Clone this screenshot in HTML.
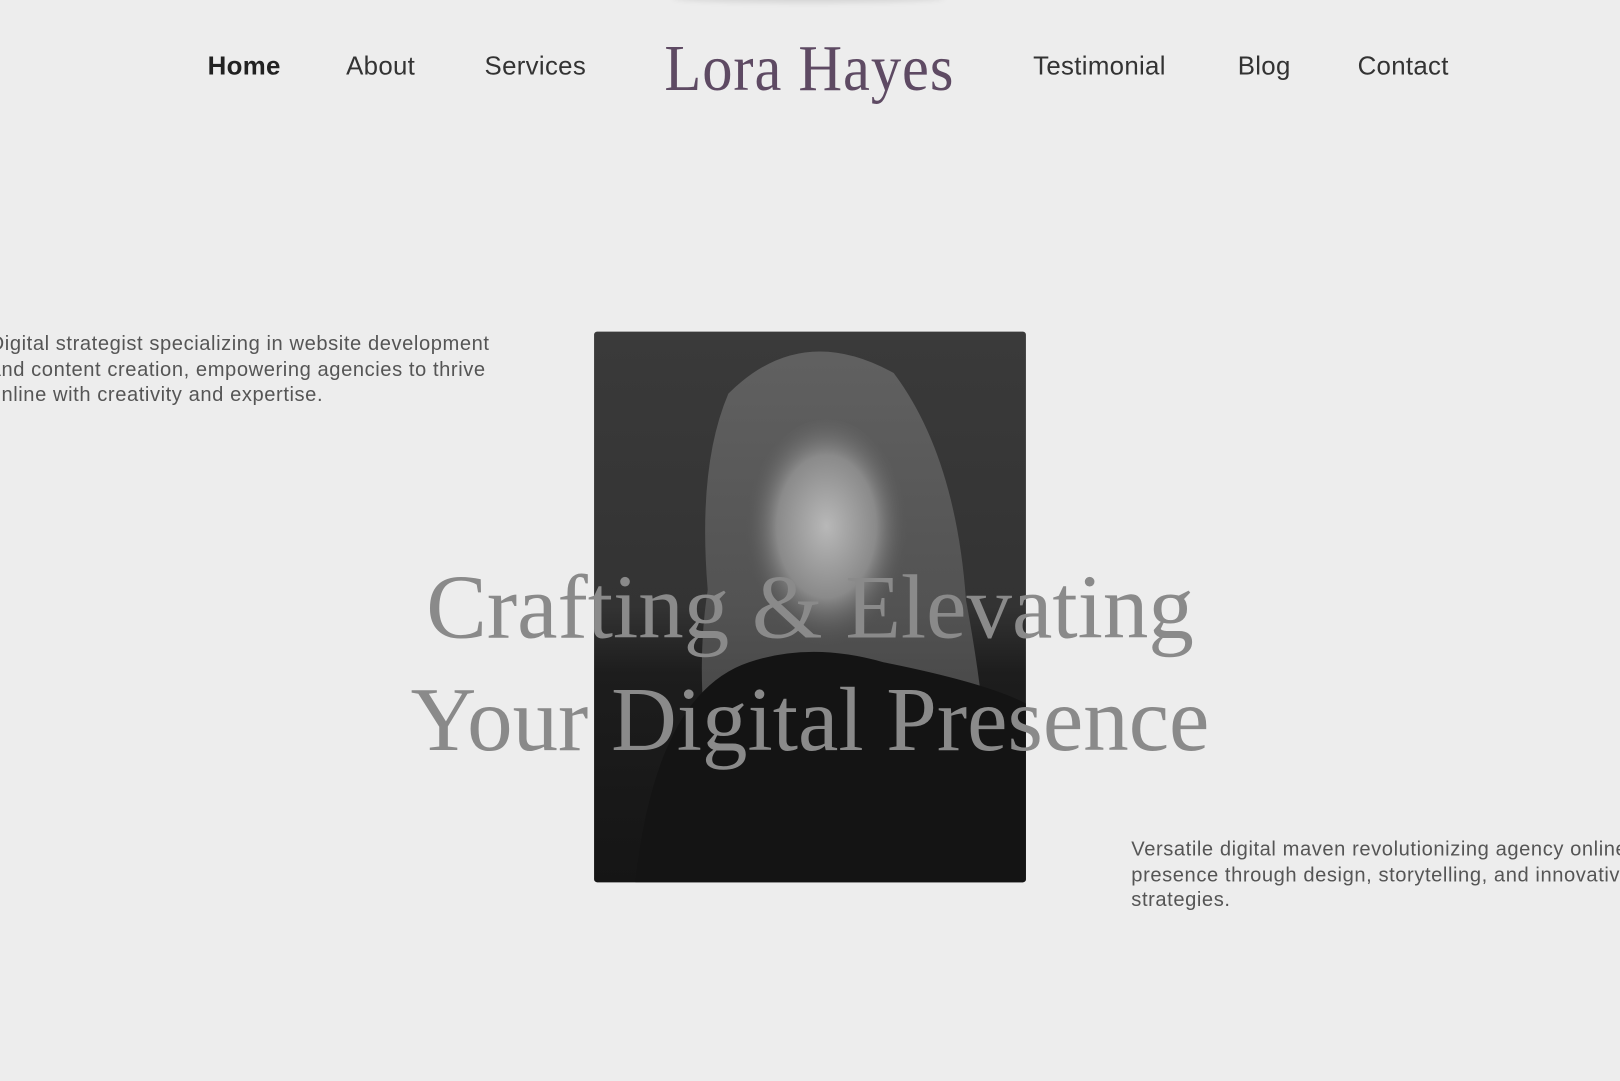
<!DOCTYPE html>
<html><head><meta charset="utf-8"><style>
html,body{margin:0;padding:0;background:#ededed;overflow:hidden;width:1620px;height:1080px}
#w{position:absolute;left:0;top:0;width:1568px;height:1046px;transform:scale(1.03316);transform-origin:0 0;font-family:"Liberation Sans",sans-serif}
.nav{position:absolute;top:48px;font-size:25px;color:#333;line-height:32px;letter-spacing:0.3px}
.logo{position:absolute;left:643px;top:30px;width:280px;font-family:"Liberation Serif",serif;font-size:64px;color:#5e4a63;line-height:72px;white-space:nowrap;transform:scaleX(0.915);transform-origin:0 0;letter-spacing:1px}
.shadow{position:absolute;left:650px;top:-10px;width:265px;height:10px;box-shadow:0 2px 6px rgba(0,0,0,.12);border-radius:50%}
.photo{position:absolute;left:575px;top:321px;width:418px;height:533px;border-radius:3px;overflow:hidden;
background:linear-gradient(180deg,#3a3a3a 0%,#333 50%,#1d1d1d 62%,#151515 100%)}
.p{position:absolute;font-size:19.5px;color:#555;line-height:24.5px;letter-spacing:0.55px}
h1{position:absolute;left:0;width:1568px;top:534px;margin:0;text-align:center;font-family:"Liberation Serif",serif;font-weight:normal;font-size:88px;line-height:109px;color:#8a8a8a}
</style></head><body><div id="w">
<div class="shadow"></div>
<div class="nav" style="left:201px;font-weight:bold;color:#222">Home</div>
<div class="nav" style="left:335px">About</div>
<div class="nav" style="left:469px">Services</div>
<div class="logo">Lora Hayes</div>
<div class="nav" style="left:1000px">Testimonial</div>
<div class="nav" style="left:1198px">Blog</div>
<div class="nav" style="left:1314px">Contact</div>
<div class="p" style="left:-10px;top:321px;width:520px;white-space:nowrap">Digital strategist specializing in website development<br>and content creation, empowering agencies to thrive<br>online with creativity and expertise.</div>
<div class="photo">
<svg width="418" height="533" viewBox="0 0 418 533">
<defs><radialGradient id="f" cx="0.5" cy="0.45" r="0.5"><stop offset="0" stop-color="#b8b8b8"/><stop offset="0.6" stop-color="#8a8a8a"/><stop offset="1" stop-color="#555" stop-opacity="0"/></radialGradient>
<linearGradient id="h" x1="0" y1="0" x2="0" y2="1"><stop offset="0" stop-color="#6a6a6a"/><stop offset="1" stop-color="#4a4a4a"/></linearGradient></defs>
<path d="M130 60 Q200 -10 290 40 Q350 120 360 260 Q390 420 380 533 L140 533 Q90 380 110 250 Q100 130 130 60Z" fill="url(#h)" opacity="0.8"/>
<ellipse cx="225" cy="200" rx="80" ry="115" fill="url(#f)"/>
<path d="M40 533 Q60 350 150 320 Q210 300 280 320 Q380 340 418 360 L418 533Z" fill="#141414"/>
</svg>
</div>
<h1>Crafting &amp; Elevating<br>Your Digital Presence</h1>
<div class="p" style="left:1095px;top:810px;width:520px;white-space:nowrap">Versatile digital maven revolutionizing agency online<br>presence through design, storytelling, and innovative<br>strategies.</div>
</div></body></html>
